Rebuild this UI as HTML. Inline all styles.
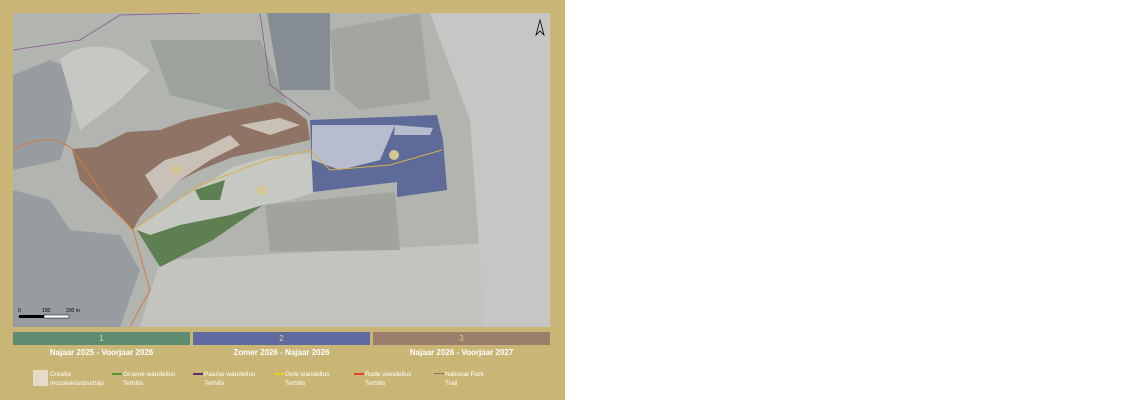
<!DOCTYPE html>
<html><head><meta charset="utf-8"><style>
body{margin:0;width:1130px;height:400px;background:#fff;position:relative;overflow:hidden;font-family:"Liberation Sans",sans-serif}
#p{position:absolute;left:0;top:0;width:565px;height:400px;background:#c9b575}
.bar{position:absolute;top:332px;height:13px;color:#e6d48a;font-size:8px;text-align:center;line-height:13px}
.lab{position:absolute;top:348px;color:#fff;font-size:8px;font-weight:bold;text-align:center}
.lg{position:absolute;top:370px;color:#fff;font-size:6.5px;line-height:9px}
.ln{position:absolute;top:373px;width:10px;height:1.5px}
</style></head><body>
<div id="p">
<svg style="position:absolute;left:13px;top:13px" width="537" height="314" viewBox="13 13 537 314">
<rect x="13" y="13" width="537" height="314" fill="#b2b4b0"/>
<path d="M13 75 L50 60 L75 70 L70 130 L60 160 L13 170Z" fill="#979ca0"/>
<path d="M13 190 L50 200 L70 230 L120 235 L140 270 L120 327 L13 327Z" fill="#979ca0"/>
<path d="M60 60 Q80 40 120 50 L150 70 L120 100 L80 130Z" fill="#c7c8c4"/>
<path d="M150 40 L260 40 L290 110 L230 110 L170 95Z" fill="#9ea29c"/>
<path d="M267 13 L330 13 L330 90 L280 90Z" fill="#858c93"/>
<path d="M330 30 L420 13 L430 100 L360 110 L335 90Z" fill="#a2a69f"/>
<path d="M160 260 L550 240 L550 327 L140 327Z" fill="#c3c4c0"/>
<path d="M430 13 L550 13 L550 327 L485 327 L470 120Z" fill="#c6c7c4"/>
<path d="M265 205 L395 192 L400 250 L270 252Z" fill="#a0a49c"/>
<path d="M72 149 L97 147 L127 132 L160 130 L187 120 L220 113 L253 107 L277 102 L290 107 L307 120 L310 140 L267 150 L233 157 L200 170 L167 187 L140 217 L133 230 L110 207 L80 180Z" fill="#8f7465"/>
<path d="M145 175 L165 160 L200 150 L230 135 L240 145 L210 160 L180 180 L160 200Z" fill="#c9c0b6"/>
<path d="M240 125 L280 118 L300 125 L270 135Z" fill="#c9c0b6"/>
<path d="M133 230 L167 207 L200 187 L233 167 L267 157 L310 153 L315 192 L290 200 L263 205 L213 240 L160 267 L137 230Z" fill="#c6c9c1"/>
<path d="M137 230 L160 267 L213 240 L263 205 L230 215 L180 225 L150 235Z" fill="#5d7f52"/>
<path d="M195 190 L225 180 L220 200 L200 200Z" fill="#5d7f52"/>
<path d="M310 120 L437 115 L443 140 L447 190 L397 197 L397 182 L313 192Z" fill="#5e6a98"/>
<path d="M312 125 L395 125 L380 160 L340 170 L312 160Z" fill="#b7bcce"/>
<path d="M395 125 L433 128 L430 135 L394 135Z" fill="#b7bcce"/>
<path d="M13 150 Q50 130 72 149 L110 205 L133 230 L150 290 L130 327" fill="none" stroke="#d27a3b" stroke-width="1"/>
<path d="M133 230 L200 185 L267 160 L310 150 L330 170 L390 165 L442 150" fill="none" stroke="#d7b04a" stroke-width="1"/>
<path d="M13 50 L80 40 L120 15 L200 13" fill="none" stroke="#8a5a8e" stroke-width="0.8"/>
<path d="M260 13 L270 85 L310 115" fill="none" stroke="#8a5a8e" stroke-width="0.8"/>
<circle cx="262" cy="190" r="5" fill="#d4c592"/><circle cx="176" cy="170" r="5" fill="#d4c592"/><circle cx="394" cy="155" r="5" fill="#d4c592"/>
<path d="M536 35 L540 20 L544 35 L540 31Z" fill="none" stroke="#000" stroke-width="0.8"/>
<rect x="19" y="315" width="25" height="3" fill="#000"/><rect x="44" y="315" width="25" height="3" fill="#fff" stroke="#000" stroke-width="0.5"/>
<text x="18" y="312" font-size="5" fill="#000">0</text><text x="42" y="312" font-size="5" fill="#000">100</text><text x="66" y="312" font-size="5" fill="#000">200 m</text>
</svg>
<div class="bar" style="left:13px;width:177px;background:#5e8d72">1</div>
<div class="bar" style="left:193px;width:177px;background:#5f6ba0">2</div>
<div class="bar" style="left:373px;width:177px;background:#9a7d6b">3</div>
<div class="lab" style="left:13px;width:177px">Najaar 2025 - Voorjaar 2026</div>
<div class="lab" style="left:193px;width:177px">Zomer 2026 - Najaar 2026</div>
<div class="lab" style="left:373px;width:177px">Najaar 2026 - Voorjaar 2027</div>
<div style="position:absolute;left:33px;top:370px;width:15px;height:16px;background:#e6dbc6"></div>
<div class="lg" style="left:50px">Creatie<br>mozaieklandschap</div>
<div class="ln" style="left:112px;background:#4c9b35"></div><div class="lg" style="left:123px">Groene wandellus<br>Terhills</div>
<div class="ln" style="left:193px;background:#6a2a6e"></div><div class="lg" style="left:204px">Paarse wandellus<br>Terhills</div>
<div class="ln" style="left:274px;background:#e8cc2a"></div><div class="lg" style="left:285px">Gele wandellus<br>Terhills</div>
<div class="ln" style="left:354px;background:#e0452a"></div><div class="lg" style="left:365px">Rode wandellus<br>Terhills</div>
<div class="ln" style="left:434px;border-top:1.5px dashed #7a7060;height:0"></div><div class="lg" style="left:445px">National Park<br>Trail</div>
</div>
</body></html>
